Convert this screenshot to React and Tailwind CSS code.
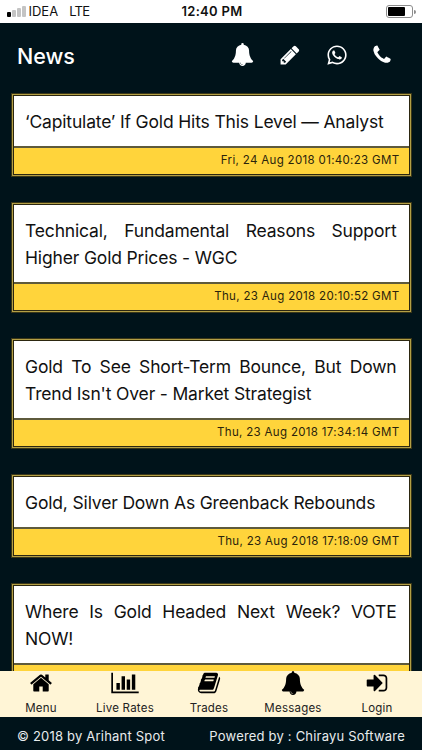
import { FaWhatsapp } from "react-icons/fa";

const BELL =
  "M912 1696q0-16-16-16-59 0-101.500-42.500t-42.500-101.500q0-16-16-16t-16 16q0 73 51.500 124.500t124.500 51.500q16 0 16-16zm816-288q0 52-38 90t-90 38h-448q0 106-75 181t-181 75-181-75-75-181h-448q-52 0-90-38t-38-90q50-42 91-88t85-119.500 74.500-158.500 50-206 19.500-260q0-152 117-282.500t307-158.500q-8-19-8-39 0-40 28-68t68-28 68 28 28 68q0 20-8 39 190 28 307 158.500t117 282.500q0 139 19.500 260t50 206 74.500 158.500 85 119.500 91 88z";
const PENCIL =
  "M491 1536l91-91-235-235-91 91v107h128v128h107zm523-928q0-22-22-22-10 0-17 7l-542 542q-7 7-7 17 0 22 22 22 10 0 17-7l542-542q7-7 7-17zm-54-192l416 416-832 832h-416v-416zm683 96q0 53-37 90l-166 166-416-416 166-165q36-38 90-38 53 0 91 38l235 234q37 39 37 91z";
const PHONE =
  "M1600 1240q0 27-10 70.500t-21 68.500q-21 50-122 106-94 51-186 51-27 0-52.500-3.500t-57.500-12.500-47.500-14.500-55.500-20.500-49-18q-98-35-175-83-128-79-264.500-215.500t-215.500-264.500q-48-77-83-175-3-9-18-49t-20.500-55.500-14.500-47.500-12.500-57.500-3.500-52.500q0-92 51-186 56-101 106-122 25-11 68.500-21t70.500-10q14 0 21 3 18 6 53 76 11 19 30 54t35 63.500 31 53.500q3 4 17.500 25t21.500 35.500 7 28.500q0 20-28.500 50t-62 55-62 53-28.500 46q0 9 5 22.500t8.500 20.500 14 24 11.500 19q76 137 174 235t235 174q2 1 19 11.500t24 14 20.500 8.500 22.500 5q18 0 46-28.500t53-62 55-62 50-28.500q14 0 28.500 7t35.500 21.500 25 17.500q25 15 53.500 31t63.500 35 54 30q70 35 76 53 3 7 3 21z";
const HOME =
  "M1472 992v480q0 26-19 45t-45 19h-384v-384h-256v384h-384q-26 0-45-19t-19-45v-480q0-1 .5-3t.5-3l575-474 575 474q1 2 1 6zm223-69l-62 74q-8 9-21 11h-3q-13 0-21-7l-692-577-692 577q-12 8-24 7-13-2-21-11l-62-74q-8-10-7-23.500t11-21.500l719-599q32-26 76-26t76 26l244 204v-195q0-14 9-23t23-9h192q14 0 23 9t9 23v408l219 182q10 8 11 21.500t-7 23.500z";
const CHART =
  "M640 896v512h-256v-512h256zm384-512v1024h-256v-1024h256zm1024 1152v128h-2048v-1536h128v1408h1920zm-640-896v768h-256v-768h256zm384-384v1152h-256v-1152h256z";
const BOOK =
  "M1703 478q40 57 18 129l-275 906q-19 64-76.500 107.500t-122.500 43.500h-923q-77 0-148.500-53.500t-99.500-131.500q-24-67-2-127 0-4 3-27t4-37q1-8-3-21.500t-3-19.500q2-11 8-21t16.500-23.500 16.500-23.500q23-38 45-91.500t30-91.500q3-10 .5-30t-.5-28q3-11 17-28t17-23q21-36 42-92t25-90q1-9-2.500-32t.5-28q4-13 22-30.500t22-22.500q19-26 42.500-84.500t27.500-96.500q1-8-3-25.500t-2-26.500q2-8 9-18t18-23 17-21q8-12 16.500-30.500t15-35 16-36 19.500-32 26.500-23.500 36-11.500 47.500 5.500l-1 3q38-9 51-9h761q74 0 114 56t18 130l-274 906q-36 119-71.500 153.500t-128.500 34.500h-869q-27 0-38 15-11 16-1 43 24 70 144 70h923q29 0 56-15.500t35-41.500l300-987q7-22 5-57 38 15 59 43zm-1064 2q-4 13 2 22.500t20 9.500h608q13 0 25.500-9.500t16.500-22.500l21-64q4-13-2-22.500t-20-9.500h-608q-13 0-25.500 9.500t-16.500 22.500zm-83 256q-4 13 2 22.500t20 9.500h608q13 0 25.500-9.500t16.500-22.500l21-64q4-13-2-22.500t-20-9.500h-608q-13 0-25.500 9.500t-16.500 22.500z";
const SIGN_IN =
  "M1312 896q0 26-19 45l-544 544q-19 19-45 19t-45-19-19-45v-288h-448q-26 0-45-19t-19-45v-384q0-26 19-45t45-19h448v-288q0-26 19-45t45-19 45 19l544 544q19 19 19 45zm352-352v704q0 119-84.500 203.500t-203.500 84.500h-320q-13 0-22.500-9.500t-9.500-22.500q0-4-1-20t-.5-26.500 3-23.500 10-19.500 20.500-6.500h320q66 0 113-47t47-113v-704q0-66-47-113t-113-47h-312l-11.500-1-11.500-3-8-5.500-7-9-2-13.500q0-4-1-20t-.5-26.500 3-23.500 10-19.500 20.500-6.500h320q119 0 203.500 84.500t84.500 203.500z";

const NEWS = [
  { title: "‘Capitulate’ If Gold Hits This Level — Analyst", date: "Fri, 24 Aug 2018 01:40:23 GMT" },
  { title: "Technical, Fundamental Reasons Support Higher Gold Prices - WGC", date: "Thu, 23 Aug 2018 20:10:52 GMT" },
  { title: "Gold To See Short-Term Bounce, But Down Trend Isn't Over - Market Strategist", date: "Thu, 23 Aug 2018 17:34:14 GMT" },
  { title: "Gold, Silver Down As Greenback Rebounds", date: "Thu, 23 Aug 2018 17:18:09 GMT" },
  { title: "Where Is Gold Headed Next Week? VOTE NOW!", date: "" },
];

const TABS = [
  { label: "Menu", path: HOME, box: "0 0 1792 1792", size: "h-6 w-6" },
  { label: "Live Rates", path: CHART, box: "0 0 2048 1792", size: "h-6 w-7" },
  { label: "Trades", path: BOOK, box: "0 0 1792 1792", size: "h-6 w-6" },
  { label: "Messages", path: BELL, box: "0 0 1792 1792", size: "h-6 w-6" },
  { label: "Login", path: SIGN_IN, box: "0 0 1792 1792", size: "h-6 w-6" },
];

function Icon({ path, box = "0 0 1792 1792", className }) {
  return (
    <svg viewBox={box} fill="currentColor" className={className}>
      <path d={path} />
    </svg>
  );
}

function StatusBar() {
  return (
    <div className="grid h-[23px] shrink-0 grid-cols-3 items-center bg-white pl-[7px] pr-[6px] text-[#111]">
      <div className="flex items-center">
        <div className="mr-[3px] flex items-end gap-[1.5px]">
          <span className="h-[5px] w-[3.5px] rounded-[1px] bg-black" />
          <span className="h-[7px] w-[3.5px] rounded-[1px] bg-[#c4c4c4]" />
          <span className="h-[9px] w-[3.5px] rounded-[1px] bg-[#c4c4c4]" />
          <span className="h-[11px] w-[3.5px] rounded-[1px] bg-[#c4c4c4]" />
        </div>
        <span className="text-[13px]">IDEA</span>
        <span className="ml-[11px] text-[13px] tracking-[-0.7px]">LTE</span>
      </div>
      <div className="pl-px text-center text-[13px] font-semibold tracking-[0.3px]">12:40 PM</div>
      <div className="flex items-center justify-end">
        <div className="h-[13px] w-[27px] rounded-[3px] border border-[#8c8c8c] p-px">
          <div className="h-full w-[17px] rounded-[1px] bg-black" />
        </div>
        <div className="ml-px h-1 w-[1.5px] rounded-r bg-[#8c8c8c]" />
      </div>
    </div>
  );
}

function Header() {
  return (
    <header className="flex h-[71px] shrink-0 items-center pb-[5px] pl-[17px] pr-[29px] text-white">
      <h1 className="flex-1 text-[21.5px] font-medium">News</h1>
      <div className="flex items-center gap-[25px] pb-[3px]">
        <Icon path={BELL} className="h-[23px] w-[23px]" />
        <Icon path={PENCIL} className="h-[22px] w-[22px]" />
        <FaWhatsapp className="h-[22px] w-[22px]" />
        <Icon path={PHONE} className="-ml-[2px] h-[22px] w-[22px]" />
      </div>
    </header>
  );
}

function NewsCard({ title, date }) {
  return (
    <article className="border border-[#b39f45] shadow-[0_0_0_1px_#3a3718]">
      <div className="border border-[#2c2710] bg-white">
        <p className="pl-[11.5px] pr-3 pt-[11.5px] pb-[11.5px] text-justify text-[17.5px] leading-[27px] tracking-[-0.16px] text-[#111]">{title}</p>
        <div className="h-[28px] border-t-2 border-[#5e5a3c] bg-[#ffd43b] pr-[9px] text-right text-[11.5px] leading-[24px] tracking-[0.33px] text-[#2a230b]">
          {date}
        </div>
      </div>
    </article>
  );
}

export default function App() {
  return (
    <div className="flex h-[750px] w-[422px] flex-col overflow-hidden bg-[#00131a] font-['Inter',sans-serif]">
      <StatusBar />
      <Header />
      <main className="-mt-px flex min-h-0 flex-1 flex-col gap-[27px] overflow-hidden px-[11.5px] pt-px">
        {NEWS.map((item) => (
          <NewsCard key={item.title} {...item} />
        ))}
      </main>
      <nav className="grid h-[46px] shrink-0 grid-cols-5 bg-[#fff5d6] pr-[2px] text-black">
        {TABS.map((tab) => (
          <div key={tab.label} className="-ml-[2px] flex flex-col items-center">
            <Icon path={tab.path} box={tab.box} className={tab.size} />
            <span className="mt-[5px] text-[11.5px] leading-[16px] tracking-[0.22px] whitespace-nowrap text-[#222]">{tab.label}</span>
          </div>
        ))}
      </nav>
      <footer className="flex h-[33px] shrink-0 items-center justify-between pt-[6px] pl-[17px] pr-[17px] text-[13px] tracking-[0.2px] text-[#e8ecee]">
        <span>© 2018 by Arihant Spot</span>
        <span>Powered by : Chirayu Software</span>
      </footer>
    </div>
  );
}
